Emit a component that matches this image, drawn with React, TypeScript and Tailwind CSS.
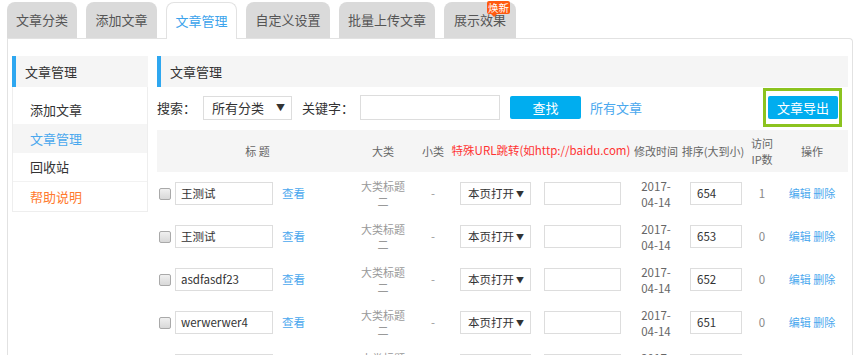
import React from "react";

const tabs = [
  { label: "文章分类", w: "w-[70px]" },
  { label: "添加文章", w: "w-[71px]" },
  { label: "文章管理", w: "w-[71px]", active: true },
  { label: "自定义设置", w: "w-[84px]" },
  { label: "批量上传文章", w: "w-[96px]" },
  { label: "展示效果", w: "w-[72px]", badge: true },
];

const rows = [
  { title: "王测试", sort: "654", visits: "1" },
  { title: "王测试", sort: "653", visits: "0" },
  { title: "asdfasdf23", sort: "652", visits: "0" },
  { title: "werwerwer4", sort: "651", visits: "0" },
  { title: "werwerwer3", sort: "650", visits: "0" },
];

function Tabs() {
  return (
    <div className="flex gap-[9px] pl-[7px] pt-[2px] h-[38px] items-start relative z-10">
      {tabs.map((t) =>
        t.active ? (
          <div
            key={t.label}
            className={`${t.w} h-[37px] bg-white border border-b-0 border-[#e2e2e2] rounded-t-[8px] flex items-center justify-center text-[13px] text-[#3ba3ec]`}
          >
            {t.label}
          </div>
        ) : (
          <div
            key={t.label}
            className={`${t.w} h-[36px] bg-[#dadada] rounded-t-[8px] flex items-center justify-center text-[13px] text-[#555] relative`}
          >
            {t.label}
            {t.badge && (
              <div className="absolute top-[-1px] right-[6px] bg-[#ff5a0f] text-white text-[10.5px] leading-[13px] px-[1px] rounded-[2px]">
                焕新
                <div className="absolute left-[4px] bottom-[-3px] w-0 h-0 border-l-[3px] border-r-[3px] border-t-[3px] border-l-transparent border-r-transparent border-t-[#ff5a0f]" />
              </div>
            )}
          </div>
        )
      )}
    </div>
  );
}

function Sidebar() {
  const items = [
    { label: "添加文章", cls: "text-[#333]" },
    { label: "文章管理", cls: "text-[#4aa8ee] bg-[#f5f5f5]" },
    { label: "回收站", cls: "text-[#333] border-b border-[#f2f2f2]" },
    { label: "帮助说明", cls: "text-[#ff7a2e]" },
  ];
  return (
    <div className="w-[136px] shrink-0 self-start">
      <div className="h-[31px] bg-[#f5f5f5] border-l-4 border-[#2ea7f0] pl-[9px] flex items-center text-[13px] text-[#333]">
        文章管理
      </div>
      <div className="border border-t-0 border-[#eeeeee] pt-[8px]">
        {items.map((it) => (
          <div
            key={it.label}
            className={`h-[29px] flex items-center pl-[17px] text-[13px] ${it.cls}`}
          >
            {it.label}
          </div>
        ))}
      </div>
    </div>
  );
}

function Checkbox() {
  return (
    <div className="w-[12px] h-[12px] rounded-[2px] border border-[#a9a9a9] bg-gradient-to-b from-[#f0f0f0] to-[#d8d8d8]" />
  );
}

function Main() {
  return (
    <div className="w-[691px] shrink-0">
      <div className="h-[31px] bg-[#f5f5f5] border-l-4 border-[#2ea7f0] pl-[9px] flex items-center text-[13px] text-[#333]">
        文章管理
      </div>
      <div className="mt-[1px] h-[39px] flex items-center text-[13px] text-[#333]">
        <span>搜索：</span>
        <div className="ml-[7px] w-[89px] h-[24px] border border-[#dddddd] flex items-center justify-between pl-[8px] pr-[6px]">
          <span>所有分类</span>
          <span className="text-[9px]">▼</span>
        </div>
        <span className="ml-[10px]">关键字：</span>
        <div className="ml-[6px] w-[140px] h-[25px] border border-[#dddddd]" />
        <div className="ml-[10px] w-[71px] h-[23px] bg-[#00adef] rounded-[2px] text-white flex items-center justify-center">
          查找
        </div>
        <span className="ml-[9px] text-[#4aa8ee]">所有文章</span>
        <div className="ml-auto mr-[6px] h-[39px] border-[3px] border-[#8cc31f] pl-[2px] pr-[1px] flex items-center">
          <div className="w-[70px] h-[23px] bg-[#00adef] rounded-[2px] text-white flex items-center justify-center">
            文章导出
          </div>
        </div>
      </div>
      <div className="mt-[3px] h-[42px] bg-[#f5f5f5] flex items-center text-[11px] text-[#666] whitespace-nowrap">
        <div className="w-[16px]" />
        <div className="w-[175px] text-center pr-[6px]">标 题</div>
        <div className="w-[70px] text-center">大类</div>
        <div className="w-[30px] flex justify-center">小类</div>
        <div className="w-[186px] flex justify-center text-[#ff3333] text-[11.5px]">
          特殊URL跳转(如http://baidu.com)
        </div>
        <div className="w-[44px] flex justify-center">修改时间</div>
        <div className="w-[70px] flex justify-center">排序(大到小)</div>
        <div className="w-[28px] flex justify-center text-center leading-[16px]">
          访问
          <br />
          IP数
        </div>
        <div className="w-[72px] text-center">操作</div>
      </div>
      {rows.map((r, i) => (
        <div key={i} className="h-[43px] flex items-center text-[11.5px] whitespace-nowrap">
          <div className="w-[16px] pl-[2px]">
            <Checkbox />
          </div>
          <div className="w-[175px] flex items-center">
            <div className="ml-[2px] w-[98px] h-[23px] border border-[#dddddd] px-[5px] flex items-center text-[#333]">
              {r.title}
            </div>
            <span className="ml-[9px] text-[#4aa8ee]">查看</span>
          </div>
          <div className="w-[70px] text-center text-[#999] text-[11px] leading-[15px]">
            大类标题
            <br />二
          </div>
          <div className="w-[30px] text-center text-[#999]">-</div>
          <div className="w-[186px] flex items-center pl-[12px]">
            <div className="w-[71px] h-[23px] border border-[#dddddd] flex items-center justify-between pl-[7px] pr-[6px] text-[#333]">
              <span>本页打开</span>
              <span className="text-[8px]">▼</span>
            </div>
            <div className="ml-[13px] w-[77px] h-[23px] border border-[#dddddd]" />
          </div>
          <div className="w-[44px] text-center text-[#666] text-[11.5px] leading-[16px]">
            2017-
            <br />
            04-14
          </div>
          <div className="w-[70px] flex justify-center pl-[6px]">
            <div className="w-[52px] h-[23px] border border-[#dddddd] px-[6px] flex items-center text-[#333]">
              {r.sort}
            </div>
          </div>
          <div className="w-[28px] text-center text-[#888]">{r.visits}</div>
          <div className="w-[72px] text-center text-[#4aa8ee] text-[11px]">编辑 删除</div>
        </div>
      ))}
    </div>
  );
}

export default function App() {
  return (
    <div className="w-[860px] h-[355px] overflow-hidden bg-white font-['Noto_Sans_CJK_SC','Liberation_Sans',sans-serif]">
      <Tabs />
      <div className="ml-[7px] w-[846px] border border-b-0 border-[#e2e2e2] rounded-tr-[4px] pt-[17px] px-[4px] flex gap-[9px] h-[400px]">
        <Sidebar />
        <Main />
      </div>
    </div>
  );
}
